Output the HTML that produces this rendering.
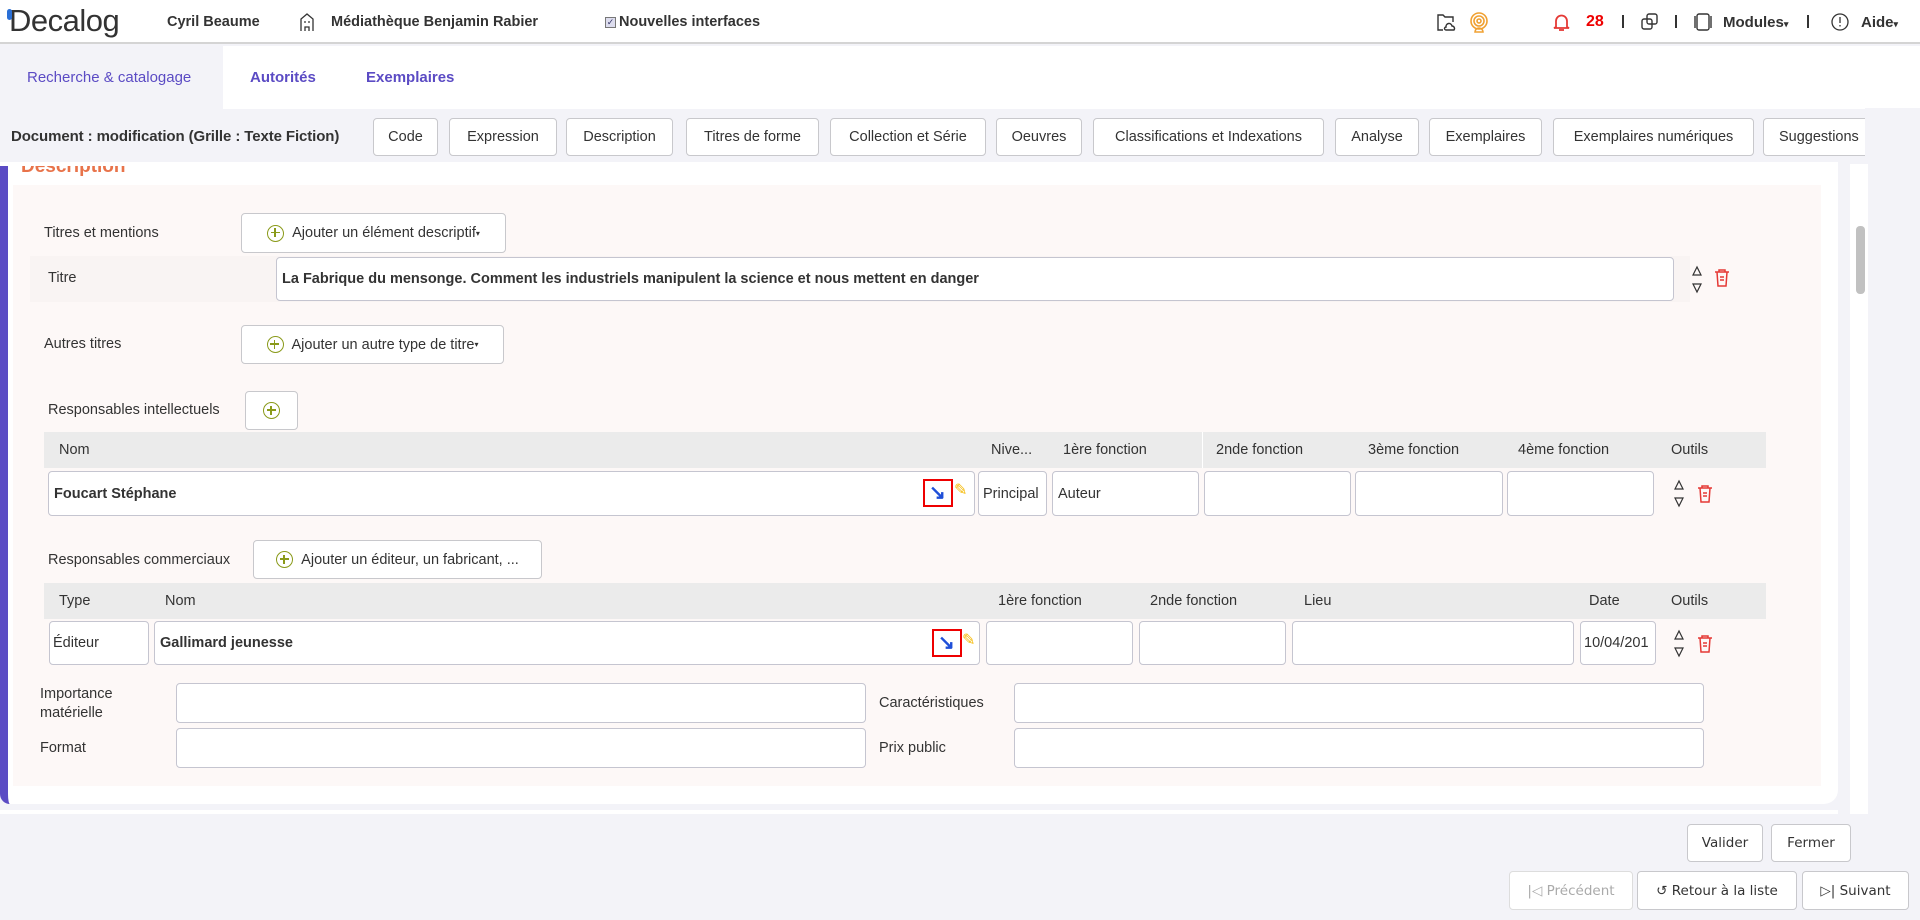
<!DOCTYPE html>
<html><head><meta charset="utf-8"><style>
*{box-sizing:border-box;margin:0;padding:0}
body{width:1920px;height:920px;overflow:hidden;background:#f3f3f8;font-family:"Liberation Sans",sans-serif;color:#333;font-size:14px;position:relative}
.a{position:absolute}
.hdr{left:0;top:0;width:1920px;height:44px;background:#fff;border-bottom:2px solid #d4d4d4}
.b{font-weight:bold}
.btn{position:absolute;background:#fff;border:1px solid #c8c8cc;border-radius:4px;display:flex;align-items:center;justify-content:center;font-size:14.5px;color:#333;white-space:nowrap;overflow:hidden}
.inp{position:absolute;background:#fff;border:1px solid #c5c5d0;border-radius:4px;display:flex;align-items:center;padding-left:5px;font-size:14.5px;white-space:nowrap;overflow:hidden}
.th{position:absolute;background:#ebebeb;height:36px}
.th span{position:absolute;top:10px;font-size:14.5px;color:#333}
.lbl{position:absolute;font-size:14.5px;color:#333}
.plus{display:inline-flex;align-items:center;justify-content:center;width:17px;height:17px;border:1.5px solid #8a9a1a;border-radius:50%;margin-right:8px;position:relative}
.plus::before{content:"";position:absolute;width:9px;height:1.5px;background:#8a9a1a;left:2.5px;top:6.3px}
.plus::after{content:"";position:absolute;width:1.5px;height:9px;background:#8a9a1a;left:6.3px;top:2.5px}
.vi{position:absolute;width:30px;height:28px;border:2px solid #e00;}
</style></head><body>
<div class="a hdr"></div>
<div class="a" style="left:9px;top:3px;font-size:31px;color:#333;letter-spacing:-0.5px">Decalog</div>
<div class="a" style="left:7px;top:9px;width:5px;height:11px;background:#2a6fd6;border-radius:3px"></div>
<div class="a b" style="left:167px;top:14px;font-size:14.5px">Cyril Beaume</div>
<svg class="a" style="left:299px;top:12px" width="16" height="20" viewBox="0 0 16 20" fill="none" stroke="#333" stroke-width="1.3"><path d="M2 19V7L8 2l6 5v12M6 19v-4h4v4M5 10h2M9 10h2"/></svg>
<div class="a b" style="left:331px;top:14px;font-size:14.5px">Médiathèque Benjamin Rabier</div>
<div class="a" style="left:605px;top:17px;width:11px;height:11px;border:1px solid #777;background:#dde;font-size:9px;line-height:9px;text-align:center;color:#336">✓</div>
<div class="a b" style="left:619px;top:14px;font-size:14.5px">Nouvelles interfaces</div>
<svg class="a" style="left:1436px;top:13px" width="20" height="19" viewBox="0 0 20 19" fill="none" stroke="#333" stroke-width="1.4"><path d="M7 17H2V2h5l2 2h8v5"/><path d="M10 17h8a2.5 2.5 0 0 0-2-4 3 3 0 0 0-6 1 1.5 1.5 0 0 0 0 3z"/></svg>
<svg class="a" style="left:1469px;top:12px" width="20" height="22" viewBox="0 0 20 22" fill="none" stroke="#f0a030" stroke-width="1.6"><circle cx="10" cy="9" r="8"/><circle cx="10" cy="9" r="5"/><circle cx="10" cy="9" r="2"/><path d="M6 20a4 4 0 0 1 8 0z"/></svg>
<svg class="a" style="left:1553px;top:12px" width="17" height="20" viewBox="0 0 17 20" fill="none" stroke="#e53935" stroke-width="1.8"><path d="M3 15V9a5.5 5.5 0 0 1 11 0v6l2 1H1z"/><path d="M6 18h5"/></svg>
<div class="a b" style="left:1586px;top:13px;font-size:16px;color:#e00">28</div>
<div class="a" style="left:1622px;top:15px;width:2px;height:13px;background:#333"></div>
<svg class="a" style="left:1641px;top:13px" width="18" height="18" viewBox="0 0 18 18" fill="none" stroke="#333" stroke-width="1.4"><rect x="6" y="1" width="10" height="10" rx="2"/><rect x="1" y="6" width="10" height="10" rx="2"/></svg>
<div class="a" style="left:1675px;top:15px;width:2px;height:13px;background:#333"></div>
<svg class="a" style="left:1693px;top:13px" width="20" height="18" viewBox="0 0 20 18" fill="none" stroke="#333" stroke-width="1.4"><rect x="4" y="1" width="12" height="16" rx="2"/><path d="M2 3v12M18 3v12"/></svg>
<div class="a b" style="left:1723px;top:14px;font-size:15px">Modules<span style="font-size:9px">▾</span></div>
<div class="a" style="left:1807px;top:15px;width:2px;height:13px;background:#333"></div>
<svg class="a" style="left:1831px;top:13px" width="18" height="18" viewBox="0 0 18 18" fill="none" stroke="#333" stroke-width="1.3"><circle cx="9" cy="9" r="8"/><path d="M9 4v6M9 12v1.5"/></svg>
<div class="a b" style="left:1861px;top:14px;font-size:15px">Aide<span style="font-size:9px">▾</span></div>

<div class="a" style="left:223px;top:46px;width:1697px;height:63px;background:#fff"></div>
<div class="a" style="left:0;top:46px;width:223px;height:63px;background:#f3f3f8"></div>
<div class="a" style="left:27px;top:69px;font-size:15px;color:#5b4bc4">Recherche &amp; catalogage</div>
<div class="a b" style="left:250px;top:69px;font-size:15px;color:#5b4bc4">Autorités</div>
<div class="a b" style="left:366px;top:69px;font-size:15px;color:#5b4bc4">Exemplaires</div>

<div class="a b" style="left:11px;top:128px;font-size:15px;letter-spacing:-0.1px">Document : modification (Grille : Texte Fiction)</div>
<div class="btn" style="left:373px;top:118px;width:65px;height:38px">Code</div>
<div class="btn" style="left:449px;top:118px;width:108px;height:38px">Expression</div>
<div class="btn" style="left:566px;top:118px;width:107px;height:38px">Description</div>
<div class="btn" style="left:686px;top:118px;width:133px;height:38px">Titres de forme</div>
<div class="btn" style="left:830px;top:118px;width:156px;height:38px">Collection et Série</div>
<div class="btn" style="left:996px;top:118px;width:86px;height:38px">Oeuvres</div>
<div class="btn" style="left:1093px;top:118px;width:231px;height:38px">Classifications et Indexations</div>
<div class="btn" style="left:1335px;top:118px;width:84px;height:38px">Analyse</div>
<div class="btn" style="left:1429px;top:118px;width:113px;height:38px">Exemplaires</div>
<div class="btn" style="left:1553px;top:118px;width:201px;height:38px">Exemplaires numériques</div>
<div class="btn" style="left:1763px;top:118px;width:120px;height:38px;justify-content:flex-start;padding-left:15px;border-right:none;border-radius:4px 0 0 4px">Suggestions</div>
<div class="a" style="left:1865px;top:108px;width:55px;height:60px;background:#f3f3f8"></div>

<div class="a" style="left:0;top:164px;width:1838px;height:640px;background:#fff;border-left:8px solid #5b4bc4;border-radius:0 0 14px 10px;overflow:hidden">
  <div class="a b" style="left:13px;top:-8px;font-size:19px;color:#e8734a">Description</div>
</div>
<div class="a" style="left:0;top:162px;width:1838px;height:4px;background:#fff"></div>
<div class="a" style="left:13px;top:185px;width:1808px;height:601px;background:#fdf8f7"></div>
<div class="a" style="left:1850px;top:164px;width:18px;height:650px;background:#fff"></div>
<div class="a" style="left:1856px;top:226px;width:9px;height:68px;background:#c1c1c1;border-radius:4px"></div>
<div class="a" style="left:0;top:810px;width:1838px;height:4px;background:#fff"></div>

<div class="lbl" style="left:44px;top:225px">Titres et mentions</div>
<div class="btn" style="left:241px;top:213px;width:265px;height:40px"><span class="plus"></span>Ajouter un élément descriptif<span style="font-size:8px">▾</span></div>
<div class="a" style="left:30px;top:256px;width:1660px;height:46px;background:#f9f4f3"></div>
<div class="lbl" style="left:48px;top:270px">Titre</div>
<div class="inp b" style="left:276px;top:257px;width:1398px;height:44px">La Fabrique du mensonge. Comment les industriels manipulent la science et nous mettent en danger</div>
<svg class="a" style="left:1690px;top:265px" width="14" height="30" viewBox="0 0 14 30" fill="none" stroke="#333" stroke-width="1.2"><path d="M7 2L3 10h8zM3 19h8l-4 8z"/></svg>
<svg class="a" style="left:1714px;top:268px" width="16" height="19" viewBox="0 0 16 19" fill="none" stroke="#e53935" stroke-width="1.5"><path d="M1 4h14M5 4V2h6v2M3 4l1 14h8l1-14M6 9h4M6 12h4"/></svg>

<div class="lbl" style="left:44px;top:336px">Autres titres</div>
<div class="btn" style="left:241px;top:325px;width:263px;height:39px"><span class="plus"></span>Ajouter un autre type de titre<span style="font-size:8px">▾</span></div>

<div class="lbl" style="left:48px;top:402px">Responsables intellectuels</div>
<div class="btn" style="left:245px;top:391px;width:53px;height:39px"><span class="plus" style="margin:0"></span></div>

<div class="th" style="left:44px;top:432px;width:1722px"><span style="left:15px">Nom</span><span style="left:947px">Nive...</span><span style="left:1019px">1ère fonction</span><span style="left:1172px">2nde fonction</span><span style="left:1324px">3ème fonction</span><span style="left:1474px">4ème fonction</span><span style="left:1627px">Outils</span></div>
<div class="a" style="left:1202px;top:432px;width:1px;height:36px;background:#fff"></div>
<div class="inp b" style="left:48px;top:471px;width:927px;height:45px">Foucart Stéphane</div>
<div class="vi" style="left:923px;top:479px"></div>
<div class="a b" style="left:929px;top:480px;font-size:20px;color:#1f4fd8">↘</div>
<div class="a" style="left:954px;top:480px;font-size:16px;color:#f5b800">✎</div>
<div class="inp" style="left:978px;top:471px;width:69px;height:45px;padding-left:4px">Principal</div>
<div class="inp" style="left:1052px;top:471px;width:147px;height:45px">Auteur</div>
<div class="inp" style="left:1204px;top:471px;width:147px;height:45px"></div>
<div class="inp" style="left:1355px;top:471px;width:148px;height:45px"></div>
<div class="inp" style="left:1507px;top:471px;width:147px;height:45px"></div>
<svg class="a" style="left:1672px;top:479px" width="14" height="30" viewBox="0 0 14 30" fill="none" stroke="#333" stroke-width="1.2"><path d="M7 2L3 10h8zM3 19h8l-4 8z"/></svg>
<svg class="a" style="left:1697px;top:484px" width="16" height="19" viewBox="0 0 16 19" fill="none" stroke="#e53935" stroke-width="1.5"><path d="M1 4h14M5 4V2h6v2M3 4l1 14h8l1-14M6 9h4M6 12h4"/></svg>

<div class="lbl" style="left:48px;top:552px">Responsables commerciaux</div>
<div class="btn" style="left:253px;top:540px;width:289px;height:39px"><span class="plus"></span>Ajouter un éditeur, un fabricant, ...</div>

<div class="th" style="left:44px;top:583px;width:1722px"><span style="left:15px">Type</span><span style="left:121px">Nom</span><span style="left:954px">1ère fonction</span><span style="left:1106px">2nde fonction</span><span style="left:1260px">Lieu</span><span style="left:1545px">Date</span><span style="left:1627px">Outils</span></div>
<div class="inp" style="left:49px;top:621px;width:100px;height:44px;padding-left:3px">Éditeur</div>
<div class="inp b" style="left:154px;top:621px;width:826px;height:44px">Gallimard jeunesse</div>
<div class="vi" style="left:932px;top:629px"></div>
<div class="a b" style="left:938px;top:630px;font-size:20px;color:#1f4fd8">↘</div>
<div class="a" style="left:962px;top:630px;font-size:16px;color:#f5b800">✎</div>
<div class="inp" style="left:986px;top:621px;width:147px;height:44px"></div>
<div class="inp" style="left:1139px;top:621px;width:147px;height:44px"></div>
<div class="inp" style="left:1292px;top:621px;width:282px;height:44px"></div>
<div class="inp" style="left:1580px;top:621px;width:76px;height:44px;padding-left:3px">10/04/201</div>
<svg class="a" style="left:1672px;top:629px" width="14" height="30" viewBox="0 0 14 30" fill="none" stroke="#333" stroke-width="1.2"><path d="M7 2L3 10h8zM3 19h8l-4 8z"/></svg>
<svg class="a" style="left:1697px;top:634px" width="16" height="19" viewBox="0 0 16 19" fill="none" stroke="#e53935" stroke-width="1.5"><path d="M1 4h14M5 4V2h6v2M3 4l1 14h8l1-14M6 9h4M6 12h4"/></svg>

<div class="lbl" style="left:40px;top:685px;line-height:19px">Importance<br>matérielle</div>
<div class="inp" style="left:176px;top:683px;width:690px;height:40px"></div>
<div class="lbl" style="left:879px;top:695px">Caractéristiques</div>
<div class="inp" style="left:1014px;top:683px;width:690px;height:40px"></div>
<div class="lbl" style="left:40px;top:740px">Format</div>
<div class="inp" style="left:176px;top:728px;width:690px;height:40px"></div>
<div class="lbl" style="left:879px;top:740px">Prix public</div>
<div class="inp" style="left:1014px;top:728px;width:690px;height:40px"></div>

<div class="btn" style="left:1687px;top:824px;width:76px;height:38px;font-family:'DejaVu Sans',sans-serif;font-size:13.5px">Valider</div>
<div class="btn" style="left:1771px;top:824px;width:80px;height:38px;font-family:'DejaVu Sans',sans-serif;font-size:13.5px">Fermer</div>
<div class="btn" style="left:1509px;top:871px;width:124px;height:39px;color:#aaa;border-color:#ddd;font-family:'DejaVu Sans',sans-serif;font-size:13.5px">|◁ Précédent</div>
<div class="btn" style="left:1637px;top:871px;width:160px;height:39px;font-family:'DejaVu Sans',sans-serif;font-size:13.5px">↺ Retour à la liste</div>
<div class="btn" style="left:1802px;top:871px;width:107px;height:39px;font-family:'DejaVu Sans',sans-serif;font-size:13.5px">▷| Suivant</div>
</body></html>
